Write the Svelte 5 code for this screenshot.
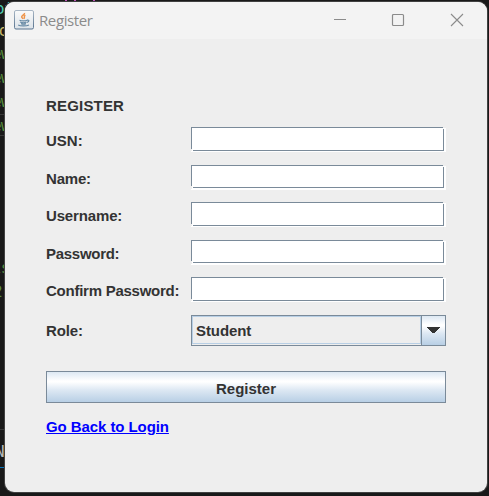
<script>
  const fields = [
    { label: 'USN:', h: 25, gap: 13, line: 22, ls: 0 },
    { label: 'Name:', h: 25, gap: 12, line: 21, ls: -0.2 },
    { label: 'Username:', h: 25, gap: 13, line: 22, ls: -0.15 },
    { label: 'Password:', h: 25, gap: 12, line: 21, ls: -0.28 },
    { label: 'Confirm Password:', h: 25, gap: 13, line: 22, ls: -0.25 }
  ];
  const fragments = [
    { text: 'oi', y: -1, x: -5, color: '#4ec9b0' },
    { text: 'lo', y: 21, x: -10, color: '#c8b96a' },
    { text: 'ew', y: 44, x: -8, color: '#568b3d' },
    { text: 'ew', y: 68, x: -8, color: '#568b3d' },
    { text: 'ew', y: 92, x: -8, color: '#568b3d' },
    { text: 'ew', y: 116, x: -8, color: '#568b3d' },
    { text: 'ls', y: 258, x: -8, color: '#568b3d' },
    { text: '2:', y: 282, x: -7, color: '#568b3d' },
    { text: 'N', y: 442, x: -5, color: '#b8b8b8' }
  ];
</script>

<div class="desktop">
  {#each fragments as f}
    <span class="code" style="left:{f.x}px;top:{f.y}px;color:{f.color}">{f.text}</span>
  {/each}
  <i class="tick t1"></i><i class="tick t2"></i><i class="tick t3"></i>
  <i class="rule r1"></i><i class="rule r2"></i><i class="rule r3"></i><i class="rule blue"></i>
  <main class="window">
    <header>
      <svg class="java" width="20" height="20" viewBox="0 0 20 20">
        <defs>
          <linearGradient id="tile" x2="0" y2="1"><stop stop-color="#fafafa" /><stop offset="1" stop-color="#dce3e9" /></linearGradient>
          <linearGradient id="edge" x2="0" y2="1"><stop stop-color="#a9b7c5" /><stop offset="1" stop-color="#58738f" /></linearGradient>
        </defs>
        <rect x=".5" y=".5" width="19" height="18.5" rx="1.5" fill="url(#tile)" stroke="url(#edge)" />
        <path d="M10.500 3c.6 2-3.400 2.300-2.800 4.100.2.700.9 1 1.300 1.700M11.400 5.300C9 6.300 11.400 7.300 9.900 8.800" fill="none" stroke="#ee9348" stroke-width="1.500" />
        <path d="M5.500 10.200c2 .9 6 .9 7.500 0M6 12c2 .8 5 .8 6.500 0M7 13.600c1.500.6 3.700.6 5 0M13 10.200c2.600-.6 2.600 1.500-.1 2.300M4.200 14.900c2 1.400 8.300 1.400 10.800 0" fill="none" stroke="#6689a4" stroke-width="1.200" />
      </svg>
      <h1>Register</h1>
      <svg class="controls" width="130" height="14" viewBox="0 0 130 14" fill="none" stroke="#8b8b8b">
        <path d="M0 6.500h12" />
        <rect x="58.500" y="1.500" width="11" height="11" rx="1" stroke-width="1.200" />
        <path d="M117 1l12 12M129 1l-12 12" stroke-width="1.100" />
      </svg>
    </header>
    <form onsubmit={(e) => e.preventDefault()}>
      <h2>REGISTER</h2>
      {#each fields as f}
        <label class="row" style="height:{f.h}px;margin-bottom:{f.gap}px">
          <span style="letter-spacing:{f.ls}px">{f.label}</span>
          <div class="field" style="--line:{f.line}px"><input aria-label={f.label} /></div>
        </label>
      {/each}
      <div class="row role">
        <span>Role:</span>
        <div class="combo">
          <div class="value">Student</div>
          <div class="arrow"><svg width="14" height="7" viewBox="0 0 14 7"><path d="M0 0h13v1h-1v1h-1v1h-1v1h-1v1h-1v1H5V5H4V4H3V3H2V2H1V1H0z" fill="#333" /></svg></div>
        </div>
      </div>
      <button>Register</button>
      <a href="#login">Go Back to Login</a>
    </form>
  </main>
</div>

<style>
  :global(body) { margin: 0; }
  *, *::before, *::after { box-sizing: border-box; }
  .desktop { position: relative; width: 489px; height: 496px; background: #191919; overflow: hidden; padding: 2px 0 0 5px; font: bold 15px/18px "Liberation Sans", Arial, sans-serif; color: #333; }
  .code { position: absolute; font: 16px/20px "DejaVu Sans Mono", monospace; letter-spacing: -1px; }
  .tick { position: absolute; top: 0; width: 2px; height: 1px; background: #bd55b9; }
  .t1 { left: 65px; } .t2 { left: 74px; } .t3 { left: 93px; }
  .rule { position: absolute; left: 0; width: 5px; height: 1px; background: #383838; }
  .r1 { top: 114px; } .r2 { top: 135px; } .r3 { top: 429px; }
  .blue { top: 467px; background: #0873b9; }
  .window { position: relative; width: 482px; height: 490px; background: #eee; border-radius: 9px; overflow: hidden; box-shadow: 0 0 0 1px #414141; }
  header { height: 37px; background: #f3f3f3; display: flex; align-items: center; padding: 0 23px 0 9px; }
  .java { margin-top: -2px; }
  h1 { margin: -2px auto 0 5px; font: 15px/20px "Open Sans", sans-serif; color: #8b8b8b; letter-spacing: -.4px; }
  .controls { margin-top: -1px; }
  form { padding: 58px 41px 0; display: flex; flex-direction: column; }
  h2 { margin: 0 0 12px; font: inherit; letter-spacing: .18px; }
  .row { display: flex; width: 400px; align-items: center; }
  .row > span { width: 145px; padding-top: 3px; white-space: nowrap; }
  .field { position: relative; width: 256px; height: 25px; border-bottom: 1px solid white; }
  .field::before, .field::after { content: ""; position: absolute; pointer-events: none; }
  .field::before { left: 0; top: 0; width: 252px; height: var(--line); border-top: 1px solid #7a8a99; border-left: 1px solid #7a8a99; }
  .field::after { left: 2px; top: 2px; width: 251px; height: var(--line); border-right: 1px solid #7a8a99; border-bottom: 1px solid #7a8a99; }
  input { display: block; width: 254px; height: 23px; border: 0; margin: 1px 0 0 1px; padding: 2px; outline: 0; background: white; font: inherit; }
  .role { height: 31px; margin-bottom: 25px; }
  .role > span { padding: 0; letter-spacing: -.1px; }
  .combo { width: 255px; height: 31px; border: 1px solid #7a8a99; display: flex; }
  .value { width: 229px; height: 28px; border: 1px solid #b8cfe5; padding: 5px 3px; letter-spacing: -.08px; }
  .arrow { width: 24px; height: 29px; border-left: 1px solid #7a8a99; background: linear-gradient(#dde8f3, #fff 30%, #fff 34%, #dde8f3 60%, #b8cfe5); display: flex; align-items: center; justify-content: center; }
  button { width: 400px; height: 32px; border: 1px solid #7a8a99; padding: 3px 0 0; font: inherit; color: #333; background: linear-gradient(#dde8f3, #fff 30%, #fff 33%, #dde8f3 60%, #b8cfe5); }
  a { margin-top: 15px; align-self: flex-start; color: #00f; text-underline-offset: 1px; letter-spacing: -.08px; }
</style>
